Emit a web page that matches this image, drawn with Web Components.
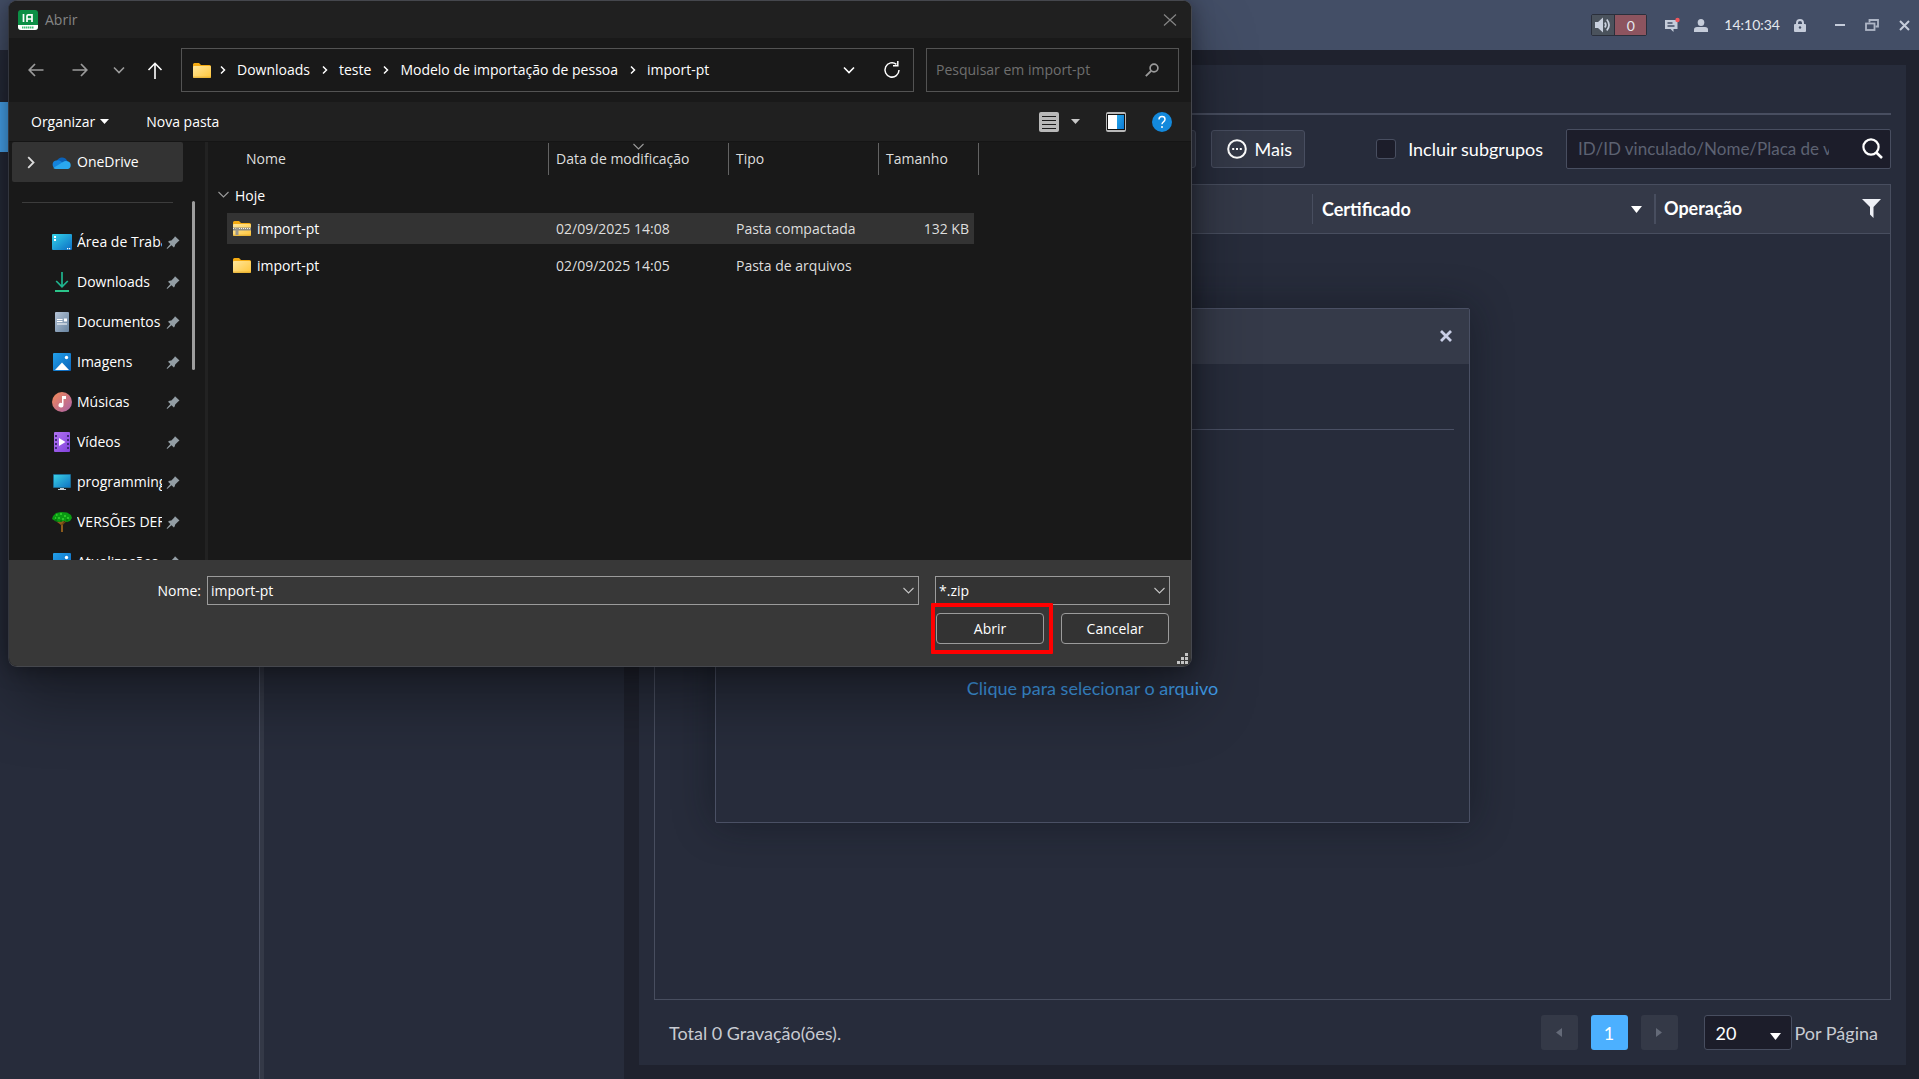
<!DOCTYPE html>
<html lang="pt-BR">
<head>
<meta charset="utf-8">
<title>Abrir</title>
<style>
  html, body { height: 100%; margin: 0; }
  body { background: #1f222e; overflow: hidden; font: 18px/24px Lato, "Open Sans", sans-serif; color: #fff; }
</style>
</head>
<body>
<client-app></client-app>
<script>
const BASE = `*{box-sizing:border-box} button,input,select{font:inherit;color:inherit;margin:0;padding:0;border:0;background:none;outline:none;border-radius:0} button{cursor:pointer} select{appearance:none}`;

function define(name, css, html, setup) {
  const tpl = document.createElement('template');
  tpl.innerHTML = `<style>${BASE}${css}</style>${html}`;
  customElements.define(name, class extends HTMLElement {
    constructor() {
      super();
      this.attachShadow({ mode: 'open' }).append(tpl.content.cloneNode(true));
    }
    connectedCallback() { if (setup) setup(this, this.shadowRoot); }
  });
}

const folder = `<path d="M0 1.5Q0 0 1.500 0H6l2 2h8.500Q18 2 18 3.500V7H0z" fill="#f5ab12"/><rect y="3" width="18" height="12" rx="1" fill="url(#g)"/><path d="M0 14.200h18" stroke="#d9a528" stroke-width=".8"/>`;
const folderGrad = `<linearGradient id="g" x1="0" y1="0" x2="1" y2="1"><stop offset="0" stop-color="#ffe69b"/><stop offset="1" stop-color="#ffc63b"/></linearGradient>`;
const pictures = `<linearGradient id="g" x1="0" y1="0" x2="1" y2="1"><stop offset="0" stop-color="#22a0ea"/><stop offset="1" stop-color="#0b63b8"/></linearGradient><rect width="18" height="18" rx="1" fill="url(#g)"/><path d="M2 17l7-7.500 7 7.500z" fill="#fff"/><circle cx="13.500" cy="4.500" r="1.700" fill="#fff"/>`;

/* name: [width, height, markup] */
const ICONS = {
  app: [20, 20, `<rect width="20" height="20" rx="3" fill="#0c8f45"/><path d="M0 15h20v2a3 3 0 0 1-3 3H3a3 3 0 0 1-3-3z" fill="#fff"/><path d="M4 17.500h12" stroke="#3fbf74" stroke-width="1.800" stroke-dasharray="1.500 .5"/><path d="M5.500 4v8M9 12V6q0-1.200 1.200-1.200H14V12M9 9h5" fill="none" stroke="#fff" stroke-width="1.700"/>`],
  closeThin: [14, 12, `<path d="M1 .5l12 11M13 .5L1 11.500" stroke="#858585" stroke-width="1.200"/>`],
  back: [16, 14, `<path d="M15.500 7H1.500M7 1L1.200 7 7 13" fill="none" stroke="#9b9b9b" stroke-width="1.700"/>`],
  forward: [16, 14, `<path d="M.5 7h14M9 1l5.800 6L9 13" fill="none" stroke="#9b9b9b" stroke-width="1.700"/>`],
  up: [16, 17, `<path d="M8 17V1.500M1.500 8L8 1.300 14.500 8" fill="none" stroke="#fff" stroke-width="1.600"/>`],
  down: [12, 8, `<path d="M1 1.500l5 5 5-5" fill="none" stroke="currentColor" stroke-width="1.600"/>`],
  downThin: [11, 7, `<path d="M.5 1l5 5 5-5" fill="none" stroke="currentColor" stroke-width="1.100"/>`],
  right: [6, 10, `<path d="M1 1.500L4.500 5 1 8.500" fill="none" stroke="#fff" stroke-width="1.500"/>`],
  rightBig: [8, 13, `<path d="M1.200 1.200L6.500 6.500 1.200 11.800" fill="none" stroke="#ddd" stroke-width="1.800"/>`],
  refresh: [16, 18, `<path d="M15 9a7 7.200 0 1 1-2.600-5.700" fill="none" stroke="#fff" stroke-width="1.500"/><path d="M13.800 0v4.800H9" fill="none" stroke="#fff" stroke-width="1.500"/>`],
  find: [14, 14, `<circle cx="9" cy="5" r="3.900" fill="none" stroke="#9a9a9a" stroke-width="1.700"/><path d="M6 8L.8 13.200" stroke="#9a9a9a" stroke-width="1.800"/>`],
  caret: [9, 5, `<path d="M0 0h9L4.500 5z" fill="currentColor"/>`],
  details: [20, 20, `<rect width="20" height="20" rx="2" fill="#b9b9b9"/><path d="M3 4.500h14M3 8.500h14M3 12.500h14M3 16.500h14" stroke="#1c1c1c" stroke-width="1.200"/>`],
  pane: [20, 20, `<linearGradient id="g" x1="0" y1="0" x2="1" y2="1"><stop offset="0" stop-color="#28a8ea"/><stop offset="1" stop-color="#0a78d4"/></linearGradient><rect width="20" height="20" rx="2" fill="#b9b9b9"/><rect x="1" y="2" width="18" height="16" fill="#111"/><rect x="2" y="3" width="9" height="14" fill="#fff"/><rect x="11" y="3" width="7" height="14" fill="url(#g)"/>`],
  help: [20, 20, `<circle cx="10" cy="10" r="10" fill="#1389dc"/><path d="M7 7.600q0-3 3-3t3 2.700q0 1.500-1.500 2.500T10 12.300" fill="none" stroke="#fff" stroke-width="1.500"/><circle cx="10" cy="15" r="1" fill="#fff"/>`],
  cloud: [20, 13, `<path d="M5 5a5.500 5.500 0 0 1 10-.5L17 9l-12 2z" fill="#0b62b8"/><path d="M4 12.500A4 4 0 0 1 4 4.600q3-.8 5 1l6 4-8 3z" fill="#1483dc"/><path d="M4 13q-1.600 0-2.800-1L11 6q2-1.400 4.500-.7A4 4 0 0 1 16 13z" fill="#2aa7ee"/>`],
  desktop: [20, 16, `<linearGradient id="g" x1="0" y1="0" x2="1" y2="1"><stop offset="0" stop-color="#35d5ea"/><stop offset="1" stop-color="#0b6cc4"/></linearGradient><rect width="20" height="16" rx="1" fill="url(#g)"/><path d="M2 2h2v2H2zM2 5h2v2H2zM15 14h1.200v1.200H15zM17 14h1.200v1.200H17z" fill="#fff"/>`],
  downloads: [14, 20, `<path d="M7 0v14M1.200 9L7 14.800 12.800 9" fill="none" stroke="#1fb58f" stroke-width="1.700"/><path d="M0 19h14" stroke="#2bc48a" stroke-width="2"/>`],
  documents: [14, 20, `<linearGradient id="g" x1="0" y1="0" x2="1" y2="1"><stop offset="0" stop-color="#b4c3d6"/><stop offset="1" stop-color="#67839f"/></linearGradient><rect width="14" height="20" rx="1" fill="url(#g)"/><path d="M2 7.500h5.500M2 9.500h5.500M2 12h10" stroke="#fff" stroke-width="1.100"/><rect x="9" y="6.500" width="3" height="3" fill="#fff"/>`],
  pictures: [18, 18, pictures],
  music: [20, 20, `<linearGradient id="g" x1="0" y1="0" x2="1" y2="1"><stop offset="0" stop-color="#f58b56"/><stop offset="1" stop-color="#a860a8"/></linearGradient><circle cx="10" cy="10" r="10" fill="url(#g)"/><path d="M10 4h4v3h-2.500v6.200a2.500 2.300 0 1 1-1.500-2.100z" fill="#fff"/>`],
  videos: [16, 20, `<linearGradient id="g" x1="0" y1="0" x2="1" y2="1"><stop offset="0" stop-color="#b173f2"/><stop offset="1" stop-color="#8141dc"/></linearGradient><rect width="16" height="20" rx="1" fill="url(#g)"/><path d="M2 3v16M14 3v16" stroke="#402a78" stroke-width="2" stroke-dasharray="2 2"/><path d="M5 6l6.500 4L5 14z" fill="#fff"/>`],
  monitor: [18, 16, `<linearGradient id="g" x1="0" y1="0" x2="1" y2="1"><stop offset="0" stop-color="#3ad0e4"/><stop offset="1" stop-color="#0f74c4"/></linearGradient><rect width="18" height="14" rx="1" fill="#1c6a92"/><rect x="1" y="1" width="16" height="12" fill="url(#g)"/><path d="M7 14h4v1H7zM5 15h8v1H5z" fill="#c3ced6"/>`],
  tree: [20, 20, `<path d="M8 9h4l-1 4v7H9v-7L5 10z" fill="#8a5a1c"/><path d="M9.500 13L14 9" stroke="#6d4312" stroke-width="1.200"/><path d="M1 4l3-3 5-1 6 .5L19 3l1 3-2 3-3 1-3-1-4 1-4-.5L0 7z" fill="#0a9a12"/><path d="M4 3h1.500M8 2h2M12 4h2M6 6h2M10 7h2M15 6h2M3 6h1" stroke="#37d431" stroke-width="1.300"/><path d="M3 8h2M8 9h2M14 8h2" stroke="#045c08"/>`],
  pin: [14, 13, `<path d="M9 .3l4.500 4.300-1.300.8-3 3q-.2 2-1.300 3.100L5.500 9.200l-4 3.500-.8.1.2-.9 3.500-3.900L2 5.800q1.300-1.200 3.400-1.300L8.300 1.600z" fill="#949ea5"/>`],
  folder: [18, 15, folderGrad + folder],
  zip: [18, 15, folderGrad + folder + `<rect y="6.500" width="18" height="3" fill="#8d8a80"/><path d="M0 7.500h18" stroke="#eee" stroke-dasharray="1 1"/><path d="M2.500 7h3v7h-3z" fill="#9a978c"/>`],
  grip: [12, 12, `<path d="M8 0h3v3H8zM4 4h3v3H4zM8 4h3v3H8zM0 8h3v3H0zM4 8h3v3H4zM8 8h3v3H8z" fill="#c4c4c4"/>`],
  speaker: [16, 16, `<path d="M0 5h3l5-4.500v15L3 11H0z" fill="#c9d0de"/><path d="M9.800 5.500q2 2.500 0 5M11.800 2.500q4.500 5.500 0 11" fill="none" stroke="#c9d0de" stroke-width="1.700"/>`],
  message: [15, 15, `<path d="M0 2h12.500v9H8.500V14L5.500 11H0z" fill="#c5ccda"/><path d="M2.500 5h5M2.500 8h7" stroke="#434e66" stroke-width="1.300"/><circle cx="12.500" cy="2" r="2.200" fill="#f0575d"/>`],
  person: [14, 13, `<ellipse cx="7" cy="3.500" rx="3.300" ry="3.500" fill="#c5ccda"/><path d="M0 13v-2.500Q0 8 3 8h8q3 0 3 2.500V13z" fill="#c5ccda"/>`],
  lock: [12, 13, `<path d="M3 6V4a3 3 0 0 1 6 0v2" fill="none" stroke="#c5ccda" stroke-width="2"/><rect y="5" width="12" height="8" rx="1" fill="#c5ccda"/><circle cx="6" cy="8.500" r="1.200" fill="#434e66"/>`],
  minimize: [10, 2, `<path d="M0 1h10" stroke="#c5ccda" stroke-width="2"/>`],
  restore: [14, 12, `<path d="M4.500 3.500V1H13v6.500h-2.500" fill="none" stroke="#aeb6c6" stroke-width="1.800"/><rect x="1" y="4.500" width="8.500" height="6.500" fill="none" stroke="#aeb6c6" stroke-width="1.800"/>`],
  close: [11, 11, `<path d="M1 1l9 9M10 1l-9 9" stroke="#c5ccda" stroke-width="2"/>`],
  closeBold: [12, 12, `<path d="M1 1l10 10M11 1L1 11" stroke="#c9cee6" stroke-width="2.800"/>`],
  more: [20, 20, `<circle cx="10" cy="10" r="8.800" fill="none" stroke="#fff" stroke-width="2"/><path d="M5.200 10h2M9 10h2M12.800 10h2" stroke="#fff" stroke-width="2"/>`],
  search: [21, 21, `<circle cx="9" cy="9" r="7.600" fill="none" stroke="#fff" stroke-width="2.200"/><path d="M14.300 14.500L20 20" stroke="#fff" stroke-width="2.600"/>`],
  funnel: [19, 19, `<path d="M0 0h19l-7.500 8v11L8 15.500V8z" fill="#eef0f6"/>`],
  triangle: [11, 7, `<path d="M0 0h11L5.500 7z" fill="#fff"/>`],
  prev: [6, 9, `<path d="M6 0v9L0 4.500z" fill="#646a78"/>`],
  next: [6, 9, `<path d="M0 0v9l6-4.500z" fill="#646a78"/>`]
};

define('ui-icon', `:host{display:inline-flex;flex:none} svg{display:block;overflow:visible}`, ``, (el, root) => {
  if (root.querySelector('svg')) return;
  const [w, h, body] = ICONS[el.getAttribute('name')];
  const t = document.createElement('template');
  t.innerHTML = `<svg width="${w}" height="${h}" viewBox="0 0 ${w} ${h}" aria-hidden="true">${body}</svg>`;
  root.append(t.content);
});

define('app-topbar', `
  :host{display:flex;flex:none;justify-content:flex-end;align-items:center;height:50px;padding:0 9px 0 0;background:#434e66;font-size:14px;color:#e4e7ee}
  .alarm{display:flex;height:22px;border:1px solid #2a2f3b;border-radius:2px;margin-right:18px}
  .alarm span{display:flex;align-items:center;justify-content:center;width:22px;background:#4a525c}
  .alarm b{width:32px;background:#8d545f;border-left:1px solid #2a2f3b;text-align:center;font-weight:400;line-height:21px}
  .icons{display:flex;align-items:center;gap:14px;margin-right:16px}
  time{margin-right:14px}
  .win{display:flex;align-items:center;gap:20px;margin-left:29px}
  button{display:flex}
`, `
  <div class="alarm"><span><ui-icon name="speaker"></ui-icon></span><b>0</b></div>
  <div class="icons"><button aria-label="Mensagens"><ui-icon name="message"></ui-icon></button><button aria-label="Usuário"><ui-icon name="person"></ui-icon></button></div>
  <time>14:10:34</time>
  <button aria-label="Bloquear"><ui-icon name="lock"></ui-icon></button>
  <div class="win"><button aria-label="Minimizar"><ui-icon name="minimize"></ui-icon></button><button aria-label="Restaurar"><ui-icon name="restore"></ui-icon></button><button aria-label="Fechar"><ui-icon name="close"></ui-icon></button></div>
`);

define('side-menu', `
  :host{display:flex;flex:none;width:624px;background:#272c3b}
  nav{width:259px;padding-top:52px}
  nav i{display:block;height:50px;background:#4cb0ff}
  .split{width:5px;background:#343947;border-left:1px solid #4b5163}
`, `<nav><i></i></nav><div class="split"></div>`);

define('people-table', `
  :host{display:flex;flex-direction:column;flex:1;border:1px solid #484e5f}
  .head{display:flex;align-items:center;height:49px;background:#343948;border-bottom:1px solid #484e5f;font-weight:700}
  .cell{display:flex;align-items:center;justify-content:space-between;height:30px;border-left:2px solid #484e5f}
  .lead{flex:1}
  .cert{width:342px;padding:0 12px 0 9px;border-left-width:1px}
  .op{width:236px;padding:0 9px 2px 8px}
  button{display:flex}
`, `
  <div class="head"><div class="lead"></div>
    <div class="cell cert">Certificado<ui-icon name="triangle"></ui-icon></div>
    <div class="cell op">Operação<button aria-label="Filtrar"><ui-icon name="funnel"></ui-icon></button></div>
  </div>
`);

define('page-footer', `
  :host{display:flex;align-items:center;height:65px;padding:0 13px 0 15px;color:#c8cbd2}
  .total{flex:1}
  button{display:flex;align-items:center;justify-content:center;width:37px;height:35px;margin-left:13px;border-radius:3px;background:#343947}
  button.on{background:#4cb0ff;color:#fff}
  .size{display:flex;align-items:center;gap:3px;margin-left:26px}
  .box{display:grid;align-items:center;width:88px;height:35px}
  .box>*{grid-area:1/1}
  select{width:100%;height:100%;padding:0 11px;background:#1c1d2a;border:1px solid #484e60;border-radius:3px;color:#fff}
  ui-icon{pointer-events:none}
  .box ui-icon{justify-self:end;margin-right:11px;padding-top:8px}
`, `
  <span class="total">Total 0 Gravação(ões).</span>
  <button aria-label="Anterior"><ui-icon name="prev"></ui-icon></button><button class="on">1</button><button aria-label="Próxima"><ui-icon name="next"></ui-icon></button>
  <div class="size"><div class="box"><select id="n"><option>20</option></select><ui-icon name="triangle"></ui-icon></div><label for="n">Por Página</label></div>
`);

define('people-page', `
  :host{display:flex;flex-direction:column;flex:1;min-width:0;margin:15px 13px 14px 15px;padding:48px 15px 0 15px;background:#272c3b}
  .bar{display:flex;align-items:center;justify-content:flex-end;height:71px;padding-bottom:2px;border-top:2px solid #484e60}
  .btn{display:flex;align-items:center;gap:8px;height:38px;padding:0 12px 0 15px;background:#343948;border:1px solid #484e60;border-radius:3px}
  .ghost{width:96px;margin-right:15px}
  .inc{display:flex;align-items:center;gap:12px;margin:0 23px 0 71px}
  input[type=checkbox]{appearance:none;width:20px;height:20px;background:#1c1d2a;border:1px solid #484e60;border-radius:3px}
  .search{display:flex;align-items:center;justify-content:space-between;width:325px;height:40px;padding:0 7px 0 11px;background:#1c1d2a;border:1px solid #484e60;border-radius:2px;font-size:17px}
  .search input{width:251px}
  .search input::placeholder{color:#5d6272;opacity:1}
  .search button{display:flex}
`, `
  <div class="bar">
    <button class="btn ghost" aria-label="Exportar"></button>
    <button class="btn"><ui-icon name="more"></ui-icon>Mais</button>
    <label class="inc"><input type="checkbox">Incluir subgrupos</label>
    <div class="search"><input type="text" aria-label="Buscar" placeholder="ID/ID vinculado/Nome/Placa de veículo"><button aria-label="Buscar"><ui-icon name="search"></ui-icon></button></div>
  </div>
  <people-table></people-table>
  <page-footer></page-footer>
`);

define('import-modal', `
  :host{display:flex;flex-direction:column;position:absolute;left:715px;top:308px;width:755px;height:515px;background:#272c3b;border:1px solid #4a5064;border-radius:2px;box-shadow:0 0 40px rgba(10,16,22,.45)}
  header{display:flex;align-items:center;justify-content:flex-end;height:55px;padding:0 17px 2px 0;background:#353a49}
  button{display:flex}
  .tabs{height:66px;margin:0 15px;border-bottom:1px solid #4a5064}
  main{display:flex;justify-content:center;padding-top:246px}
  a{color:#409de8;text-decoration:none}
`, `
  <header><button aria-label="Fechar"><ui-icon name="closeBold"></ui-icon></button></header>
  <div class="tabs"></div>
  <main><a href="#">Clique para selecionar o arquivo</a></main>
`);

define('path-crumb', `:host{display:flex;align-items:center;gap:11px}`, `<ui-icon name="right"></ui-icon><slot></slot>`);

define('quick-link', `
  :host{display:flex;align-items:center;height:40px;padding-right:3px}
  .ic{display:flex;justify-content:center;width:20px;margin:0 5px 0 40px}
  .t{flex:1;overflow:hidden;white-space:nowrap;margin-right:4px}
`, `<span class="ic"></span><span class="t"><slot></slot></span><ui-icon name="pin"></ui-icon>`, (el, root) => {
  const ic = document.createElement('ui-icon');
  ic.setAttribute('name', el.getAttribute('icon'));
  root.querySelector('.ic').replaceChildren(ic);
});

define('places-list', `
  :host{display:flex;flex:none;width:196px;height:100%;padding-left:3px;overflow:hidden}
  .list{width:171px}
  .one{display:flex;align-items:center;height:40px;padding-left:15px;background:#333;border-radius:2px}
  .one ui-icon:first-child{width:25px}
  .one span{margin-left:5px}
  hr{height:1px;margin:20px 10px 19px;border:0;background:#3c3c3c}
  .bar{width:3px;height:169px;margin:59px 0 0 9px;border-radius:2px;background:#9d9d9d}
`, `
  <div class="list">
    <div class="one"><ui-icon name="rightBig"></ui-icon><ui-icon name="cloud"></ui-icon><span>OneDrive</span></div>
    <hr>
    <quick-link icon="desktop">Área de Trabalho</quick-link>
    <quick-link icon="downloads">Downloads</quick-link>
    <quick-link icon="documents">Documentos</quick-link>
    <quick-link icon="pictures">Imagens</quick-link>
    <quick-link icon="music">Músicas</quick-link>
    <quick-link icon="videos">Vídeos</quick-link>
    <quick-link icon="monitor">programming</quick-link>
    <quick-link icon="tree">VERSÕES DEFENSE</quick-link>
    <quick-link icon="pictures">Atualizações</quick-link>
  </div>
  <div class="bar"></div>
`);

define('file-list', `
  :host{display:block;flex:1;border-left:3px solid #222;padding-top:1px}
  table{table-layout:fixed;width:771px;border-collapse:separate;border-spacing:0}
  th{font-weight:400;text-align:left;color:#dedede}
  td{color:#dedede}
  td,th{padding:0 0 0 7px;white-space:nowrap}
  thead th{position:relative;height:32px;border-right:1px solid #636363}
  thead th:first-child{padding-left:38px}
  thead ui-icon{position:absolute;left:84px;top:0;line-height:0;color:#9a9a9a}
  .grp{height:38px;padding:4px 0 0 10px;color:#fff}
  .grp ui-icon{margin-right:6px;vertical-align:3px;color:#9a9a9a}
  tbody td{height:37px;background-clip:padding-box;border:0 solid transparent;border-bottom-width:6px}
  tbody td:first-child{border-left-width:19px;padding-left:6px;color:#fff}
  tbody td:last-child{border-right-width:5px;padding-right:5px;text-align:right}
  .sel td{background-color:#333}
  .f{display:flex;align-items:center;gap:6px}
`, `
  <table>
    <colgroup><col style="width:341px"><col style="width:180px"><col style="width:150px"><col style="width:100px"></colgroup>
    <thead><tr><th>Nome</th><th>Data de modificação<ui-icon name="downThin"></ui-icon></th><th>Tipo</th><th>Tamanho</th></tr></thead>
    <tbody>
      <tr><th class="grp" colspan="4"><ui-icon name="downThin"></ui-icon>Hoje</th></tr>
      <tr class="sel"><td><div class="f"><ui-icon name="zip"></ui-icon>import-pt</div></td><td>02/09/2025 14:08</td><td>Pasta compactada</td><td>132 KB</td></tr>
      <tr><td><div class="f"><ui-icon name="folder"></ui-icon>import-pt</div></td><td>02/09/2025 14:05</td><td>Pasta de arquivos</td><td></td></tr>
    </tbody>
  </table>
`);

define('file-dialog', `
  :host{display:flex;flex-direction:column;position:absolute;left:8px;top:0;width:1184px;font:14px/20px "Segoe UI","Open Sans",sans-serif;background:#191919;border:1px solid #45474d;border-left-color:#33363e;border-radius:9px;overflow:hidden;box-shadow:0 32px 64px rgba(0,0,0,.37),0 2px 21px rgba(0,0,0,.37)}
  button{display:flex;align-items:center;justify-content:center}
  .title{display:flex;align-items:center;height:37px;padding:0 14px 0 9px;background:#202020;color:#858585}
  .title ui-icon{margin-right:7px}
  .title span{flex:1}
  .title button ui-icon{margin:0}
  .nav{display:flex;align-items:center;height:64px;padding:0 12px 0 19px}
  .arrows{display:flex;align-items:center;width:153px;color:#9b9b9b}
  .arrows button:nth-child(2){margin-left:28px}
  .arrows button:nth-child(3){margin-left:25px}
  .arrows button:nth-child(4){margin-left:22px}
  .path{display:flex;align-items:center;flex:1;gap:12px;height:44px;padding:0 13px 0 11px;border:1px solid #535353}
  .path>ui-icon{margin-right:-3px}
  .path .drop{margin-left:auto;margin-right:17px}
  .find{display:flex;align-items:center;justify-content:space-between;width:253px;height:44px;margin-left:12px;padding:0 19px 0 9px;border:1px solid #535353}
  .find input{width:200px}
  .find input::placeholder{color:#6f6f6f;opacity:1}
  .tools{display:flex;align-items:center;height:39px;padding:0 19px 0 22px;background:#202020}
  .tools button{gap:5px;margin-right:37px}
  .tools .end{display:flex;align-items:center;margin-left:auto}
  .tools .end button{gap:12px;margin:0 0 0 26px;color:#c8c8c8}
  .files{display:flex;height:419px;border-top:1px solid #151515}
  .foot{display:grid;grid-template-columns:712px 235px;gap:8px 16px;justify-content:end;padding:16px 21px 22px 0;background:#383838}
  .name{grid-column:1;display:flex;align-items:center;gap:6px;height:29px;margin-left:-50px}
  .name label{width:44px;text-align:right}
  .combo{display:grid;align-items:center;flex:1;height:29px}
  .combo>*{grid-area:1/1}
  .combo input,.combo select{width:100%;height:100%;padding:0 3px;background:#383838;border:1px solid #9b9b9b}
  .combo select{background:#333}
  .combo ui-icon{justify-self:end;margin-right:5px;pointer-events:none;color:#c4c4c4}
  .acts{grid-column:2;display:flex;justify-content:space-between;padding:0 1px}
  .acts button{width:108px;height:31px;background:#333;border:1px solid #9b9b9b;border-radius:4px}
  .mark{position:relative}
  .mark::after{content:"";position:absolute;inset:-10px -9px -10px -5px;border:4px solid #f00;border-radius:1px;pointer-events:none}
  .grip{position:absolute;right:2px;bottom:1px}
`, `
  <div class="title"><ui-icon name="app"></ui-icon><span>Abrir</span><button aria-label="Fechar"><ui-icon name="closeThin"></ui-icon></button></div>
  <div class="nav">
    <div class="arrows"><button aria-label="Voltar"><ui-icon name="back"></ui-icon></button><button aria-label="Avançar"><ui-icon name="forward"></ui-icon></button><button aria-label="Recentes"><ui-icon name="down"></ui-icon></button><button aria-label="Acima"><ui-icon name="up"></ui-icon></button></div>
    <div class="path"><ui-icon name="folder"></ui-icon><path-crumb>Downloads</path-crumb><path-crumb>teste</path-crumb><path-crumb>Modelo de importação de pessoa</path-crumb><path-crumb>import-pt</path-crumb>
      <button class="drop" aria-label="Locais anteriores"><ui-icon name="down"></ui-icon></button><button aria-label="Atualizar"><ui-icon name="refresh"></ui-icon></button></div>
    <div class="find"><input type="text" aria-label="Pesquisar" placeholder="Pesquisar em import-pt"><ui-icon name="find"></ui-icon></div>
  </div>
  <div class="tools"><button>Organizar<ui-icon name="caret"></ui-icon></button><button>Nova pasta</button>
    <div class="end"><button aria-label="Exibição"><ui-icon name="details"></ui-icon><ui-icon name="caret"></ui-icon></button><button aria-label="Painel"><ui-icon name="pane"></ui-icon></button><button aria-label="Ajuda"><ui-icon name="help"></ui-icon></button></div></div>
  <div class="files"><places-list></places-list><file-list></file-list></div>
  <div class="foot">
    <div class="name"><label for="fn">Nome:</label><div class="combo"><input id="fn" type="text" value="import-pt"><ui-icon name="downThin"></ui-icon></div></div>
    <div class="combo"><select aria-label="Tipo de arquivo"><option>*.zip</option></select><ui-icon name="downThin"></ui-icon></div>
    <div class="acts"><div class="mark"><button>Abrir</button></div><button>Cancelar</button></div>
  </div>
  <ui-icon class="grip" name="grip"></ui-icon>
`);

define('client-app', `
  :host{display:flex;flex-direction:column;position:relative;min-height:100vh}
  .body{display:flex;flex:1}
`, `
  <app-topbar></app-topbar>
  <div class="body"><side-menu></side-menu><people-page></people-page></div>
  <import-modal></import-modal>
  <file-dialog></file-dialog>
`);
</script>
</body>
</html>
